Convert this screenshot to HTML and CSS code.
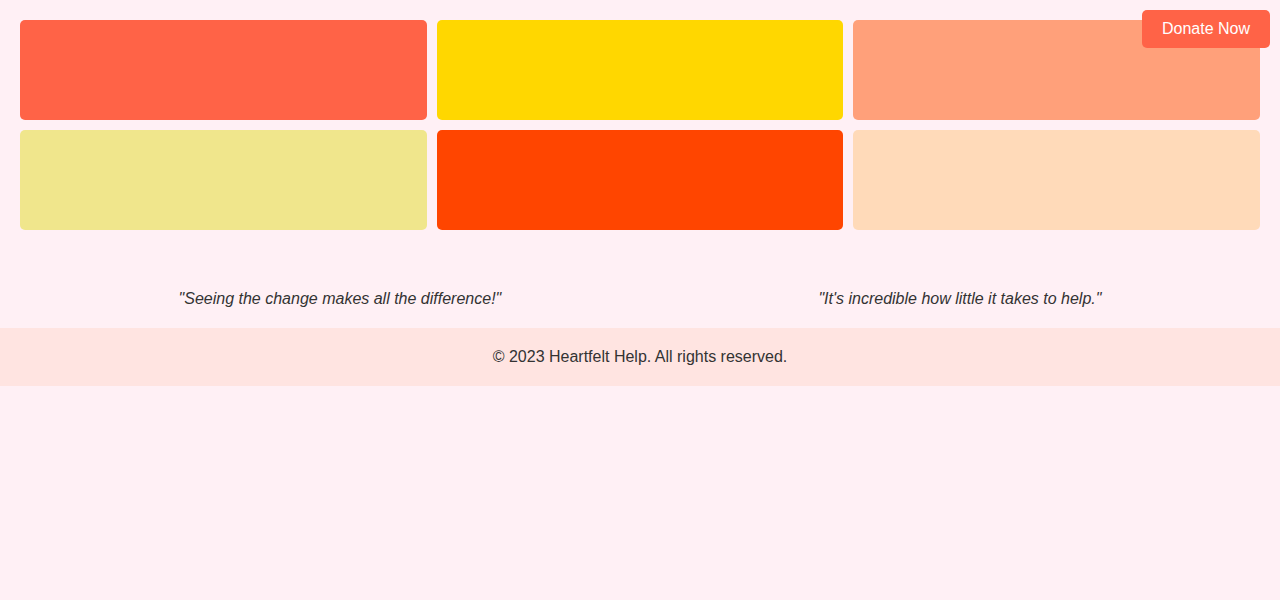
FILE: index.html
```html
<!DOCTYPE html>
<html lang="en">
<head>
<meta charset="utf-8">
<title>Heartfelt Help</title>
<link rel="stylesheet" href="styles.css">
</head>
<body>
<a class="donate" href="#">Donate Now</a>
<main>
  <section class="gallery">
    <div class="tile tomato"></div>
    <div class="tile gold"></div>
    <div class="tile salmon"></div>
    <div class="tile khaki"></div>
    <div class="tile orangered"></div>
    <div class="tile peach"></div>
  </section>
  <section class="testimonials">
    <p class="quote">"Seeing the change makes all the difference!"</p>
    <p class="quote">"It's incredible how little it takes to help."</p>
  </section>
</main>
<footer class="footer">© 2023 Heartfelt Help. All rights reserved.</footer>
</body>
</html>
```
FILE: styles.css
```css
* { box-sizing: border-box; }
html, body {
  margin: 0;
  padding: 0;
  background: #fff0f5;
  font-family: "Liberation Sans", Arial, sans-serif;
  font-size: 16px;
  color: #333;
}
.donate {
  position: fixed;
  top: 10px;
  right: 10px;
  background: #ff6347;
  color: #fff;
  text-decoration: none;
  padding: 10px 20px;
  border-radius: 5px;
  line-height: 18px;
}
.gallery {
  display: grid;
  grid-template-columns: repeat(3, 1fr);
  grid-auto-rows: 100px;
  gap: 10px;
  padding: 20px;
}
.tile { border-radius: 5px; }
.tomato { background: #ff6347; }
.gold { background: #ffd700; }
.salmon { background: #ffa07a; }
.khaki { background: #f0e68c; }
.orangered { background: #ff4500; }
.peach { background: #ffdab9; }
.testimonials {
  display: flex;
  justify-content: space-around;
  padding: 40px 20px 20px;
}
.quote {
  margin: 0;
  font-style: italic;
  line-height: 18px;
}
.footer {
  background: #ffe4e1;
  text-align: center;
  padding: 20px;
  line-height: 18px;
}
```
